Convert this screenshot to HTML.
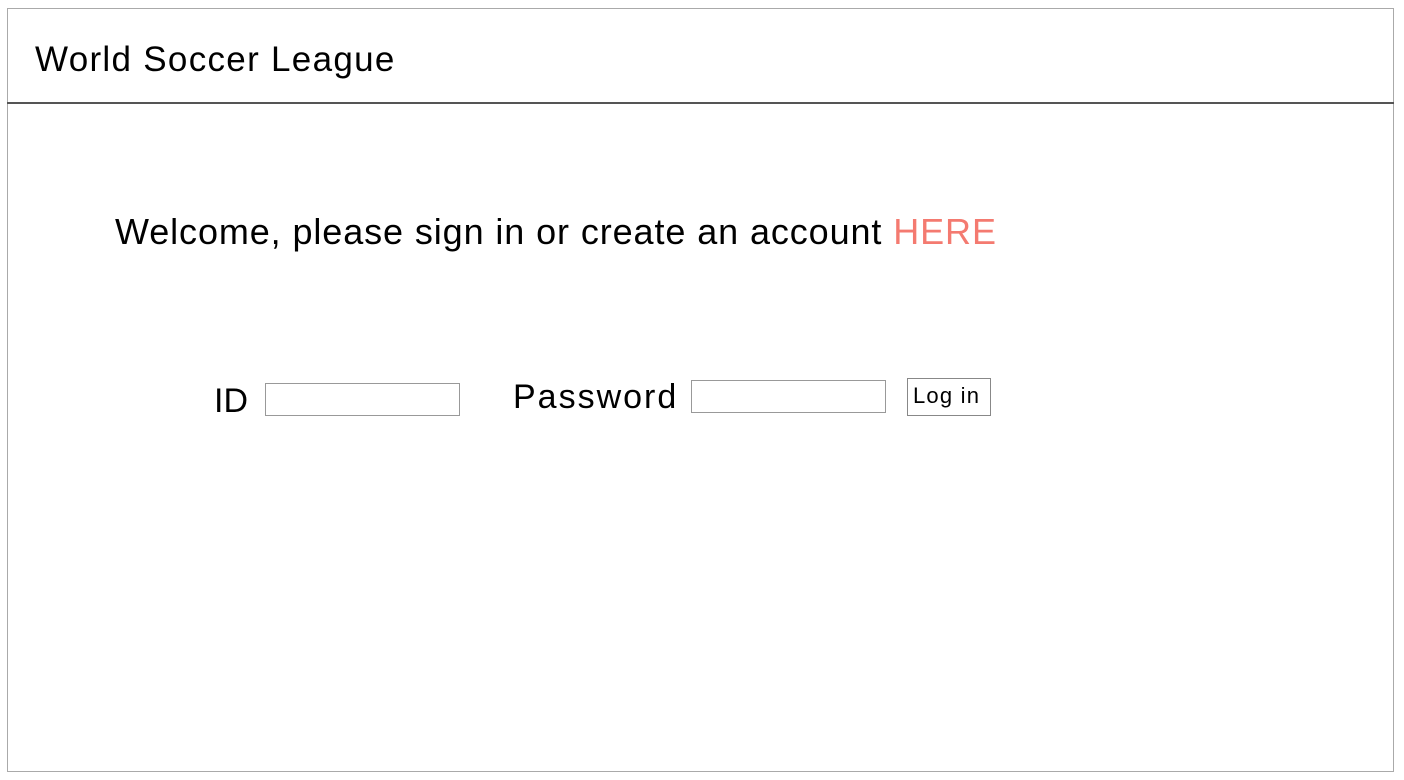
<!DOCTYPE html>
<html><head><style>
body{margin:0;width:1404px;height:780px;background:#fff;font-family:"Liberation Sans",Arial,sans-serif;position:relative;overflow:hidden}
.box{position:absolute;left:7px;top:8px;width:1385px;height:762px;border:1.5px solid #aaa}
.hline{position:absolute;left:7px;top:102px;width:1387px;height:1.5px;background:#555}
.t{position:absolute;white-space:nowrap;color:#000;line-height:1}
.in{position:absolute;border:1.5px solid #999;background:#fff;box-sizing:border-box}
</style></head><body>
<div class="box"></div>
<div class="hline"></div>
<div class="t" style="left:35px;top:42px;font-size:35px;letter-spacing:1.3px">World Soccer League</div>
<div class="t" style="left:115px;top:214px;font-size:36px;letter-spacing:0.9px">Welcome, please sign in or create an account <span style="color:#f47a70">HERE</span></div>
<div class="t" style="left:214px;top:384px;font-size:34px">ID</div>
<div class="in" style="left:265px;top:383px;width:195px;height:33px"></div>
<div class="t" style="left:513px;top:380px;font-size:34px;letter-spacing:2px">Password</div>
<div class="in" style="left:691px;top:380px;width:195px;height:33px"></div>
<div class="in" style="left:907px;top:378px;width:84px;height:38px;border-color:#888"></div>
<div class="t" style="left:913px;top:385px;font-size:22px;letter-spacing:1.2px">Log in</div>
</body></html>
